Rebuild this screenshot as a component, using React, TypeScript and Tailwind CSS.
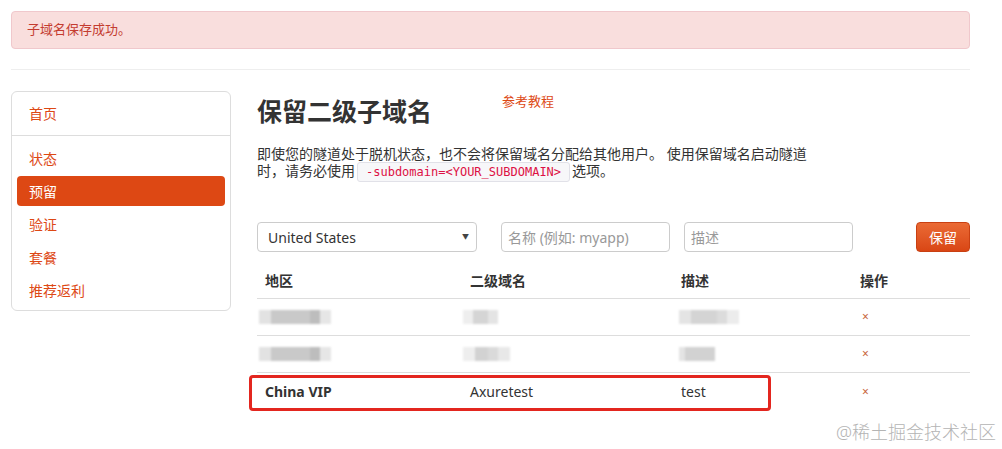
import React from "react";

const font = { fontFamily: '"Noto Sans", "Noto Sans CJK SC", sans-serif' };

const navItems = ["状态", "预留", "验证", "套餐", "推荐返利"];

function Blur({ segs }: { segs: [number, string][] }) {
  return (
    <div className="flex h-[14px] blur-[1px]">
      {segs.map(([w, c], i) => (
        <div key={i} style={{ width: w, background: c }} />
      ))}
    </div>
  );
}

function Row({ cells, last }: { cells: React.ReactNode[]; last?: boolean }) {
  return (
    <div
      className={`grid h-[37px] grid-cols-[205px_211px_179px_118px] items-center ${
        last ? "" : "border-b border-[#dddddd]"
      }`}
    >
      {cells}
    </div>
  );
}

function Del() {
  return <div className="pl-[10px] text-[12px] text-[#c8643a]">×</div>;
}

export default function App() {
  return (
    <div className="relative h-[449px] w-[1002px] overflow-hidden bg-white text-[#333333]" style={font}>
      <div className="ml-[11px] w-[959px] pt-[11px]">
        <div className="flex h-[38px] items-center rounded-[4px] border border-[#f0c8cc] bg-[#f9dedd] pl-[15px] text-[13px] text-[#c43c30]">
          子域名保存成功。
        </div>
        <div className="mt-[20px] border-t border-[#eeeeee]" />

        <div className="mt-[21px] flex items-start">
          <div className="w-[220px] rounded-[6px] border border-[#dddddd] px-[5px] pt-[6px] pb-[5px] text-[14px]">
            <div className="flex h-[30px] items-center pl-[12px] text-[#dd4814]">首页</div>
            <div className="mx-[-5px] my-[7px] border-t border-[#dddddd]" />
            {navItems.map((t, i) => (
              <div
                key={t}
                className={`flex h-[30px] items-center rounded-[4px] pl-[12px] ${
                  i > 0 ? "mt-[3px]" : ""
                } ${t === "预留" ? "bg-[#dd4814] text-white" : "text-[#dd4814]"}`}
              >
                {t}
              </div>
            ))}
          </div>

          <div className="ml-[26px] flex-1">
            <div className="flex items-start">
              <h1 className="text-[25px] font-bold leading-[40px] text-[#333333]">保留二级子域名</h1>
              <a className="ml-[70px] text-[13px] leading-[20px] text-[#dd4814]">参考教程</a>
            </div>

            <p className="mt-[14px] w-[556px] text-[14px] leading-[17px] text-[#333333]">
              即使您的隧道处于脱机状态，也不会将保留域名分配给其他用户。 使用保留域名启动隧道时，请务必使用
              <code
                className="mx-[2px] inline-block rounded-[3px] border border-[#e1e1e8] bg-[#f7f7f9] px-[8px] py-[2px] align-middle text-[12px] leading-[14px] text-[#dd1144]"
                style={{ fontFamily: '"DejaVu Sans Mono", "Liberation Mono", monospace' }}
              >
                -subdomain=&lt;YOUR_SUBDOMAIN&gt;
              </code>
              选项。
            </p>

            <div className="mt-[40px] flex h-[30px] items-center text-[14px]">
              <div className="flex h-[30px] w-[220px] items-center justify-between rounded-[4px] border border-[#cccccc] pr-[7px] pl-[10px] text-[#333333]">
                <span>United States</span>
                <span className="text-[7px] text-[#444444]">▼</span>
              </div>
              <div className="ml-[24px] flex h-[30px] w-[169px] items-center rounded-[4px] border border-[#cccccc] pl-[6px] text-[#999999]">
                名称 (例如: myapp)
              </div>
              <div className="ml-[14px] flex h-[30px] w-[169px] items-center rounded-[4px] border border-[#cccccc] pl-[6px] text-[#999999]">
                描述
              </div>
              <button className="ml-auto flex h-[30px] w-[54px] items-center justify-center rounded-[4px] border border-[#c94012] bg-gradient-to-b from-[#ea6a34] to-[#d94614] text-[14px] text-white">
                保留
              </button>
            </div>

            <div className="mt-[11px] text-[14px]">
              <div className="grid h-[36px] grid-cols-[205px_211px_179px_118px] items-center border-b border-[#dddddd] font-bold">
                <div className="pl-[8px]">地区</div>
                <div className="pl-[8px]">二级域名</div>
                <div className="pl-[8px]">描述</div>
                <div className="pl-[8px]">操作</div>
              </div>
              <Row
                cells={[
                  <div key="a" className="pl-[2px]">
                    <Blur segs={[[12, "#e2e2e2"], [39, "#c9c9c9"], [10, "#bdbdbd"], [11, "#e6e6e6"]]} />
                  </div>,
                  <div key="b" className="pl-[1px]">
                    <Blur segs={[[10, "#eeeeee"], [15, "#d5d5d5"], [10, "#e4e4e4"]]} />
                  </div>,
                  <div key="c" className="pl-[6px]">
                    <Blur segs={[[12, "#e4e4e4"], [26, "#d4d4d4"], [10, "#dcdcdc"], [12, "#ececec"]]} />
                  </div>,
                  <Del key="d" />,
                ]}
              />
              <Row
                cells={[
                  <div key="a" className="pl-[2px]">
                    <Blur segs={[[12, "#e2e2e2"], [39, "#c9c9c9"], [10, "#bdbdbd"], [11, "#e6e6e6"]]} />
                  </div>,
                  <div key="b" className="pl-[1px]">
                    <Blur segs={[[12, "#eeeeee"], [13, "#d2d2d2"], [10, "#dadada"], [12, "#e8e8e8"]]} />
                  </div>,
                  <div key="c" className="pl-[6px]">
                    <Blur segs={[[6, "#e4e4e4"], [30, "#d2d2d2"]]} />
                  </div>,
                  <Del key="d" />,
                ]}
              />
              <div className="relative">
                <Row
                  last
                  cells={[
                    <div key="a" className="pl-[8px] font-bold">China VIP</div>,
                    <div key="b" className="pl-[8px]">Axuretest</div>,
                    <div key="c" className="pl-[8px]">test</div>,
                    <Del key="d" />,
                  ]}
                />
                <div className="absolute top-[2px] left-[-8px] h-[36px] w-[522px] rounded-[4px] border-[3px] border-[#e3261f]" />
              </div>
            </div>
          </div>
        </div>
      </div>

      <div className="absolute top-[419px] left-[836px] text-[18px] leading-[26px] font-light text-[#b4b4b4]">
        @稀土掘金技术社区
      </div>
    </div>
  );
}
